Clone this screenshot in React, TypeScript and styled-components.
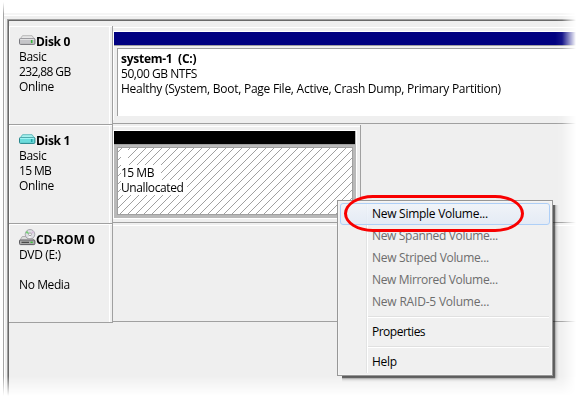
import React from "react";
import styled, { createGlobalStyle } from "styled-components";

const Global = createGlobalStyle`
  * { box-sizing: border-box; }
  body { margin: 0; background: #fff; }
`;

const Stage = styled.main`
  position: relative;
  width: 581px;
  height: 400px;
  overflow: hidden;
  background: #fff;
  color: #000;
  font: 12px/15px "Open Sans", "Noto Sans", sans-serif;
  white-space: pre;
`;

const Frame = styled.div`
  display: flex;
  flex-direction: column;
  width: 578px;
  height: 400px;
  margin-left: 3px;
  border-left: 1px solid #a5a5a5;
  box-shadow: inset 1px 0 #fff;
  mask-image: linear-gradient(to bottom, transparent 2px, #000 14px, #000 376px, transparent 396px),
    linear-gradient(to right, #000 552px, rgba(0, 0, 0, 0.92) 559px, transparent 573px);
  mask-composite: intersect;
`;

const TopPane = styled.div`
  flex: none;
  height: 19px;
  background: linear-gradient(#f5f5f5, #f5f5f5) 0 13px / 100% 2px no-repeat,
    linear-gradient(#efefef, #efefef) 0 16px / 100% 3px no-repeat;
`;

const Body = styled.div`
  flex: 1;
  display: flex;
  flex-direction: column;
  margin-left: 1px;
  padding-left: 2px;
  background: #efefef;
`;

const List = styled.section`
  flex: 1;
  padding: 6px 0 0 1px;
  border-top: 1px solid #a0a0a0;
  border-left: 1px solid #a0a0a0;
  box-shadow: inset 1px 1px #696969;
`;

const DiskRow = styled.div`
  display: flex;
  height: 99px;
`;

const Label = styled.div`
  width: 104px;
  height: 99px;
  padding: 8px 0 0 10px;
  border: solid #a0a0a0;
  border-width: 0 1px 1px 0;
  box-shadow: inset 0 1px #fff, inset 1px 0 #fff, inset -2px 0 #efefef, inset -3px 0 #fff;
`;

const Title = styled.h2`
  display: flex;
  align-items: flex-start;
  height: 15px;
  margin: 0;
  font-size: 12px;
  line-height: 15px;
`;

const Line = styled.div<{ $track?: number }>`
  height: 15px;
  letter-spacing: ${(p) => p.$track ?? -0.3}px;
`;

const IconSlot = styled.span<{ $raised?: boolean }>`
  display: block;
  width: 17px;
  flex: none;
  line-height: 0;
  margin-top: ${(p) => (p.$raised ? -3 : 1)}px;
`;

const Caption = styled.span<{ $track?: number }>`
  letter-spacing: ${(p) => p.$track ?? -0.3}px;
`;

const Lane = styled.div<{ $short?: boolean }>`
  flex: ${(p) => (p.$short ? "none" : 1)};
  width: ${(p) => (p.$short ? "248px" : "auto")};
  height: 98px;
  padding-top: 5px;
  border-bottom: 1px solid #a0a0a0;
  border-right: ${(p) => (p.$short ? "1px solid #a0a0a0" : "none")};
  box-shadow: inset 0 1px #efefef, inset 0 2px #fff;
`;

const Filler = styled.div`
  flex: 1;
  height: 98px;
  border-bottom: 1px solid #a0a0a0;
`;

const Volume = styled.div<{ $selected?: boolean }>`
  width: ${(p) => (p.$selected ? "244px" : "auto")};
  height: 89px;
  border: 1px solid #fff;
  border-width: ${(p) => (p.$selected ? "1px" : "1px 0 0 1px")};
  background: ${(p) => (p.$selected ? "#b9b9b9" : "#efefef")};
`;

const Stripe = styled.div<{ $color: string; $inset?: boolean }>`
  height: 14px;
  margin-right: ${(p) => (p.$inset ? 1 : 0)}px;
  background: ${(p) => p.$color};
  border-bottom: 1px solid #a0a0a0;
`;

const Box = styled.div<{ $selected?: boolean }>`
  position: relative;
  display: flex;
  flex-direction: column;
  height: 68px;
  margin: 2px ${(p) => (p.$selected ? 3 : 0)}px 0 3px;
  padding: ${(p) => (p.$selected ? "2px 0 0 3px" : "2px 0 0 3px")};
  border: 1px solid #a0a0a0;
  border-width: ${(p) => (p.$selected ? "1px" : "1px 0 0 1px")};
  background: #fff;
`;

const Hatch = styled.svg`
  position: absolute;
  inset: 0;
  width: 100%;
  height: 100%;
`;

const Patch = styled.span<{ $track?: number; $width: number }>`
  position: relative;
  width: ${(p) => p.$width}px;
  height: 15px;
  background: #fff;
  letter-spacing: ${(p) => p.$track ?? 0}px;
`;

const Menu = styled.ul`
  position: absolute;
  left: 337px;
  top: 200px;
  width: 216px;
  height: 176px;
  margin: 0;
  padding: 2px;
  list-style: none;
  border: 1px solid #979797;
  background: linear-gradient(#e2e3e3, #e2e3e3) 28px 2px / 1px 170px no-repeat,
    linear-gradient(#fff, #fff) 29px 2px / 1px 170px no-repeat, #f0f0f0;
  box-shadow: inset 0 0 0 1px #f5f5f5, 2px 2px 1px rgba(0, 0, 0, 0.45), 3px 3px 3px rgba(0, 0, 0, 0.3);
  clip-path: polygon(0 0, 216px 0, 216px 5px, 224px 5px, 224px 184px, 5px 184px, 5px 176px, 0 176px);
`;

const Item = styled.li<{ $state?: "active" | "disabled"; $track?: number }>`
  height: 22px;
  padding: ${(p) => (p.$state === "active" ? "2px 0 0 31px" : "3px 0 0 32px")};
  border: ${(p) => (p.$state === "active" ? "1px solid #aecff7" : "none")};
  border-radius: 3px;
  background: ${(p) =>
    p.$state === "active" ? "linear-gradient(rgba(240,244,250,.8), rgba(226,234,246,.85))" : "none"};
  color: ${(p) => (p.$state === "disabled" ? "#6d6d6d" : "#000")};
  letter-spacing: ${(p) => p.$track ?? -0.27}px;
`;

const Rule = styled.li`
  height: 2px;
  margin: 3px 1px 3px 28px;
  background: linear-gradient(#e0e0e0 50%, #fff 50%);
`;

const Marker = styled.div`
  position: absolute;
  left: 344px;
  top: 195px;
  width: 180px;
  height: 37px;
  border: 3px solid #f80000;
  border-radius: 29px / 18.5px;
`;

const DiskIcon = ({ teal }: { teal?: boolean }) => (
  <svg width="17" height="12" viewBox="0 0 17 12">
    <path d="M3.5 .7h9.6l2.7 4H.7z" fill={teal ? "#a6f2ee" : "#e7e7e7"} stroke={teal ? "#4aaeb2" : "#aaa"} strokeWidth=".8" />
    <rect x=".5" y="3.5" width="15.4" height="5.9" rx="1" fill={teal ? "#6cdcdc" : "#c4c4c8"} stroke={teal ? "#26858b" : "#77777d"} />
    <path d="M1.2 4.2h14" stroke={teal ? "#b8ffff" : "#eee"} />
    <path d="M12.7 5v3" stroke={teal ? "#24a6a8" : "#32b637"} strokeWidth="1.6" />
  </svg>
);

const CdIcon = () => (
  <svg width="17" height="17" viewBox="0 0 17 17">
    <circle cx="11" cy="5.3" r="4.8" fill="#dedee4" stroke="#9898a0" strokeWidth=".8" />
    <path d="M11 5.3 8 1.7 6.5 4z" fill="#74cf74" />
    <path d="m11 5.3 3-3.6 1 2z" fill="#d8b9dc" />
    <path d="M11 5.3 9 9.5l3 .2z" fill="#f6f6f6" />
    <circle cx="11" cy="5.3" r="1.4" fill="#fff" stroke="#888" strokeWidth=".7" />
    <path d="M3.3 7.5h3.2l1.8 2h5.2l2.2 2H.7z" fill="#dcdcdc" stroke="#999" strokeWidth=".7" />
    <rect x=".5" y="11" width="15.4" height="4.6" rx="1" fill="#aaa" stroke="#5c5c60" />
    <path d="M2.5 13.3H10" stroke="#333" />
    <path d="M11.5 13.3h2.2" stroke="#35c535" strokeWidth="1.4" />
  </svg>
);

export default function App() {
  return (
    <Stage>
      <Global />
      <Frame>
        <TopPane />
        <Body>
          <List>
            <DiskRow>
              <Label>
                <Title><IconSlot><DiskIcon /></IconSlot><Caption>Disk 0</Caption></Title>
                <Line>Basic</Line>
                <Line $track={-0.6}>232,88 GB</Line>
                <Line>Online</Line>
              </Label>
              <Lane>
                <Volume>
                  <Stripe $color="#000080" />
                  <Box>
                    <Caption as="b" $track={-0.27}>system-1  (C:)</Caption>
                    <Line $track={-0.45}>50,00 GB NTFS</Line>
                    <Line $track={-0.26}>Healthy (System, Boot, Page File, Active, Crash Dump, Primary Partition)</Line>
                  </Box>
                </Volume>
              </Lane>
            </DiskRow>
            <DiskRow>
              <Label>
                <Title><IconSlot><DiskIcon teal /></IconSlot><Caption>Disk 1</Caption></Title>
                <Line>Basic</Line>
                <Line $track={-0.65}>15 MB</Line>
                <Line>Online</Line>
              </Label>
              <Lane $short>
                <Volume $selected>
                  <Stripe $color="#000" $inset />
                  <Box $selected>
                    <Hatch shapeRendering="crispEdges">
                      <defs>
                        <pattern id="hatch" width="8" height="8" patternUnits="userSpaceOnUse">
                          {[0, 1, 2, 3, 4, 5, 6, 7].map((i) => (
                            <rect key={i} x={i} y={(11 - i) % 8} width="1" height="1" fill="#a0a0a0" />
                          ))}
                        </pattern>
                      </defs>
                      <rect width="100%" height="100%" fill="url(#hatch)" />
                    </Hatch>
                    <Patch $width={7} />
                    <Patch $width={40} $track={-0.5}>15 MB</Patch>
                    <Patch $width={66} $track={-0.4}>Unallocated</Patch>
                  </Box>
                </Volume>
              </Lane>
              <Filler />
            </DiskRow>
            <DiskRow>
              <Label>
                <Title><IconSlot $raised><CdIcon /></IconSlot><Caption $track={-0.05}>CD-ROM 0</Caption></Title>
                <Line $track={-0.35}>DVD (E:)</Line>
                <Line> </Line>
                <Line $track={-0.4}>No Media</Line>
              </Label>
              <Lane />
            </DiskRow>
          </List>
        </Body>
      </Frame>
      <Menu>
        <Item $state="active">New Simple Volume...</Item>
        <Item $state="disabled" $track={-0.33}>New Spanned Volume...</Item>
        <Item $state="disabled" $track={-0.32}>New Striped Volume...</Item>
        <Item $state="disabled" $track={-0.34}>New Mirrored Volume...</Item>
        <Item $state="disabled" $track={-0.2}>New RAID-5 Volume...</Item>
        <Rule />
        <Item $track={-0.5}>Properties</Item>
        <Rule />
        <Item>Help</Item>
      </Menu>
      <Marker />
    </Stage>
  );
}
